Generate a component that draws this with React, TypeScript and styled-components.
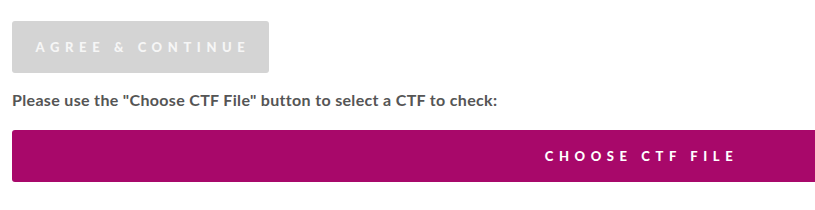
import React from "react";
import styled, { createGlobalStyle } from "styled-components";

const Global = createGlobalStyle`
  html, body { margin: 0; padding: 0; background: #fff; overflow: hidden; }
  body { font-family: "Lato", "Noto Sans", sans-serif; }
`;

const Page = styled.div`
  padding: 21px 0 0 12px;
  display: flex;
  flex-direction: column;
  align-items: flex-start;
`;

const Button = styled.button<{ $variant: "disabled" | "primary"; $width: number }>`
  box-sizing: border-box;
  width: ${(p) => p.$width}px;
  flex-shrink: 0;
  height: 52px;
  border: none;
  border-radius: 3px;
  background: ${(p) => (p.$variant === "disabled" ? "#d4d4d4" : "#a8086a")};
  color: ${(p) => (p.$variant === "disabled" ? "#f6f6f6" : "#ffffff")};
  font-family: "Lato", "Noto Sans", sans-serif;
  font-weight: 900;
  font-size: 13px;
  letter-spacing: 5.6px;
  text-transform: uppercase;
  padding: 0 0 0 5px;
  display: flex;
  align-items: center;
  justify-content: center;
  cursor: ${(p) => (p.$variant === "disabled" ? "default" : "pointer")};
`;

const Prompt = styled.p`
  margin: 17px 0 21px;
  font-size: 16px;
  font-weight: 700;
  letter-spacing: 0.33px;
  color: #555555;
  line-height: 19px;
`;

export default function App() {
  return (
    <>
      <Global />
      <Page>
        <Button $variant="disabled" $width={257} disabled>
          Agree &amp; Continue
        </Button>
        <Prompt>Please use the "Choose CTF File" button to select a CTF to check:</Prompt>
        <Button $variant="primary" $width={1254}>
          Choose CTF File
        </Button>
      </Page>
    </>
  );
}
